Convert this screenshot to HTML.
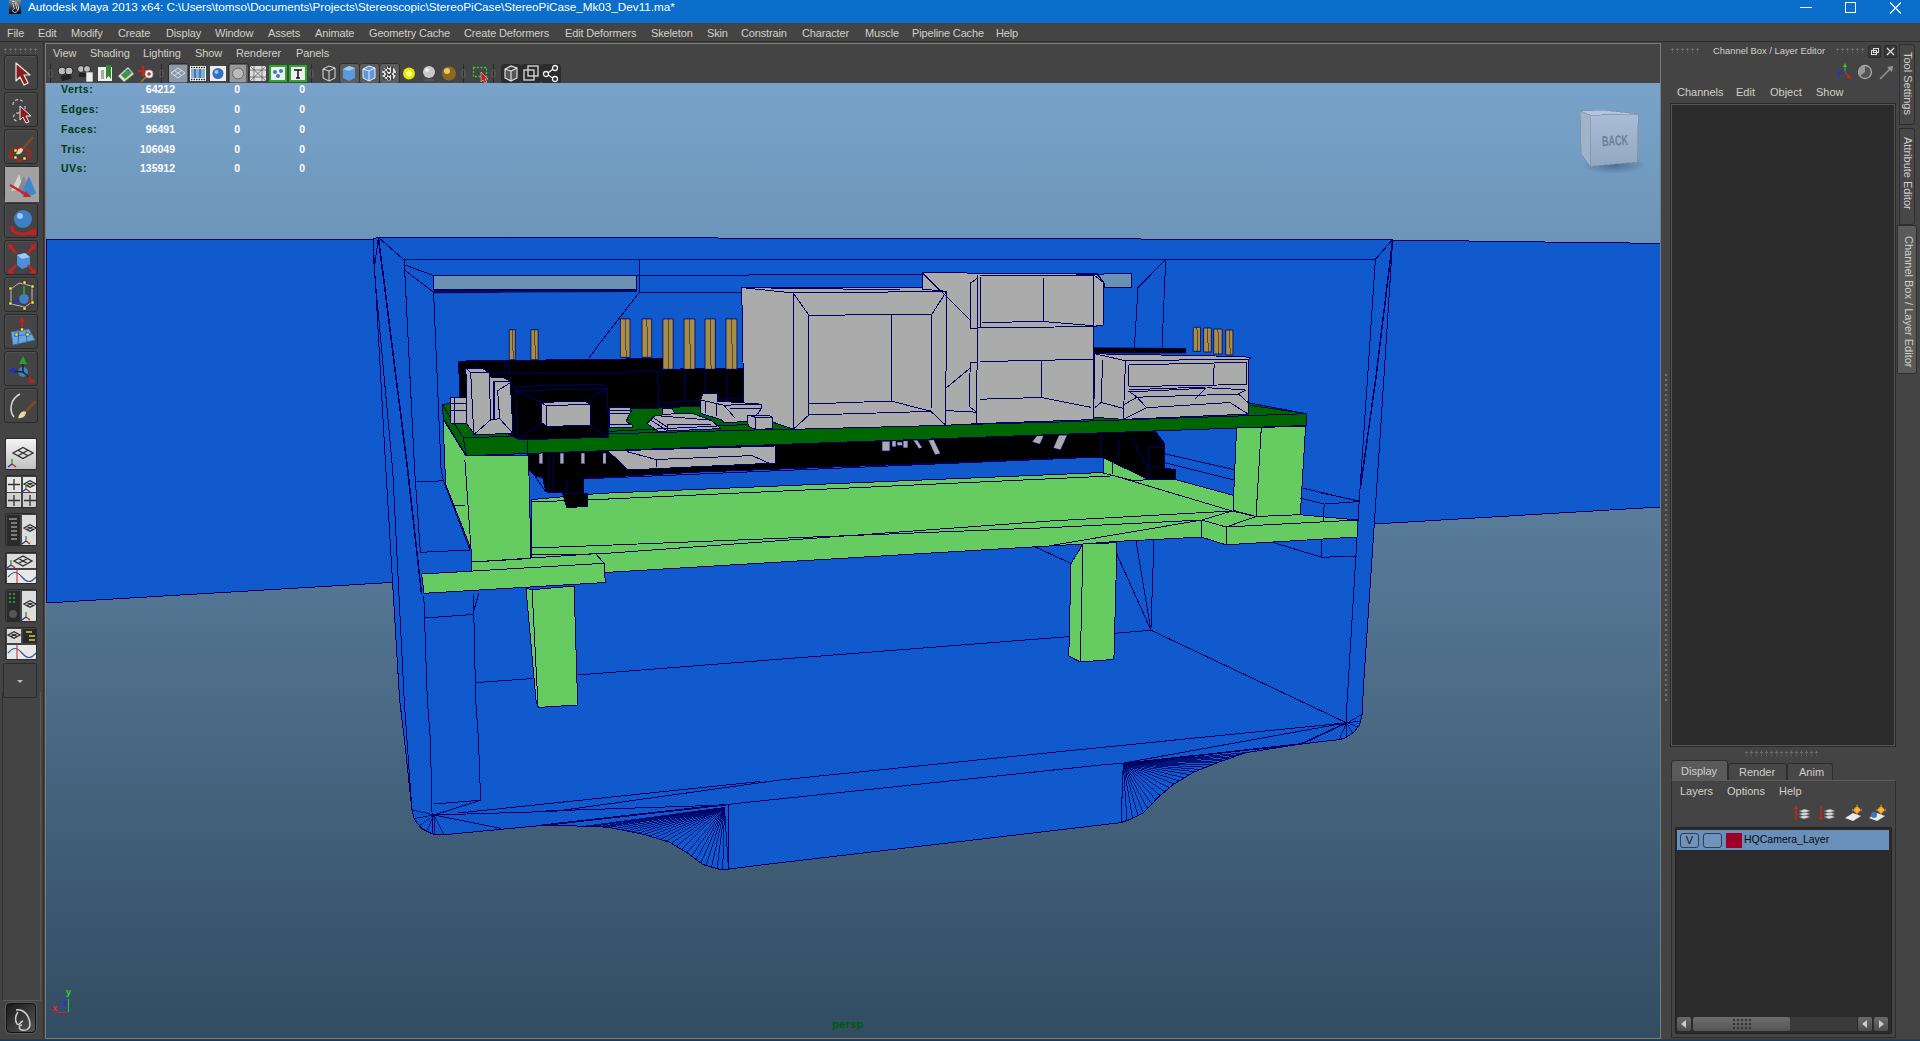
<!DOCTYPE html>
<html><head><meta charset="utf-8">
<style>
*{margin:0;padding:0;box-sizing:border-box}
html,body{width:1920px;height:1041px;overflow:hidden;background:#444444;font-family:"Liberation Sans",sans-serif;}
.a{position:absolute}
#title{left:0;top:0;width:1920px;height:23px;background:#0b6ecb;color:#fff;font-size:12px}
#title .t{left:28px;top:0px;white-space:nowrap;line-height:14px;font-size:11.7px}
#menubar{left:0;top:23px;width:1920px;height:19px;background:#444444;border-bottom:1px solid #2d2d2d}
.mi{position:absolute;top:4px;font-size:11px;line-height:12px;color:#d2d0c8;white-space:nowrap;letter-spacing:-0.15px}
#toolbox{left:0;top:42px;width:44px;height:999px;background:#444444;border-right:1px solid #2e2e2e}
.tb{position:absolute;left:4px;width:34px;height:35px;border:1px solid #2a2a2a;border-radius:3px;background:#444;box-shadow:inset 1px 1px 0 #505050}
.tb svg{position:absolute;left:0;top:0}
.lb{position:absolute;left:5px;width:32px;border:1px solid #2a2a2a;border-radius:2px;background:#444}
#panel{left:45px;top:43px;width:1616px;height:996px;border:1px solid #7b7b7b;background:#444}
.pm{position:absolute;top:2.5px;letter-spacing:-0.1px;font-size:11px;line-height:12px;color:#d2d0c8;white-space:nowrap}
#right{left:1661px;top:42px;width:259px;height:997px;background:#444444}
.rt{position:absolute;font-size:11px;line-height:12px;color:#d2d0c8;white-space:nowrap}
.stat{position:absolute;font-weight:bold;font-size:10.5px;line-height:12px;white-space:nowrap;letter-spacing:0.2px}
.g{color:#003a10}
.w{color:#ffffff;text-align:right}
.ico{position:absolute;top:20px;width:18px;height:18px}
.dots{position:absolute;height:5px;background-image:radial-gradient(circle at 1.5px 1.5px,#6a6a6a 1px,transparent 1.3px);background-size:5px 4px}
</style></head><body>
<div id="title" class="a">
 <svg class="a" style="left:9px;top:0px" width="12" height="14" viewBox="0 0 12 14"><defs><linearGradient id="ig" x1="0" y1="0" x2="0" y2="1"><stop offset="0" stop-color="#8a9096"/><stop offset="0.55" stop-color="#3a3e42"/><stop offset="1" stop-color="#000"/></linearGradient></defs><rect x="0" y="0" width="12" height="14" fill="url(#ig)"/><path d="M3 1.5 C6 1 9 3 9.5 7 C10 10 8 12.5 5.5 12.5 C3.5 12 3 10 4.5 9.5 M3.5 3 C5 5 4 7 5.5 9 M6 3 C7.5 5 7 8 8.5 10" stroke="#dcdcdc" stroke-width="0.9" fill="none"/></svg>
 <div class="a t">Autodesk Maya 2013 x64: C:\Users\tomso\Documents\Projects\Stereoscopic\StereoPiCase\StereoPiCase_Mk03_Dev11.ma*</div>
 <svg class="a" style="left:1795px;top:0" width="120" height="22"><line x1="5" y1="7.5" x2="17" y2="7.5" stroke="#fff" stroke-width="1"/><rect x="50.5" y="2.5" width="10" height="10" fill="none" stroke="#fff" stroke-width="1"/><path d="M95 2.5 L106 13.5 M106 2.5 L95 13.5" stroke="#fff" stroke-width="1.1"/></svg>
</div>
<div id="menubar" class="a">
 <span class="mi" style="left:7px">File</span>
 <span class="mi" style="left:38px">Edit</span>
 <span class="mi" style="left:71px">Modify</span>
 <span class="mi" style="left:118px">Create</span>
 <span class="mi" style="left:166px">Display</span>
 <span class="mi" style="left:215px">Window</span>
 <span class="mi" style="left:268px">Assets</span>
 <span class="mi" style="left:315px">Animate</span>
 <span class="mi" style="left:369px">Geometry Cache</span>
 <span class="mi" style="left:464px">Create Deformers</span>
 <span class="mi" style="left:565px">Edit Deformers</span>
 <span class="mi" style="left:651px">Skeleton</span>
 <span class="mi" style="left:707px">Skin</span>
 <span class="mi" style="left:741px">Constrain</span>
 <span class="mi" style="left:802px">Character</span>
 <span class="mi" style="left:865px">Muscle</span>
 <span class="mi" style="left:912px">Pipeline Cache</span>
 <span class="mi" style="left:996px">Help</span>
</div>
<div id="toolbox" class="a">
 <div class="dots" style="left:4px;top:6px;width:34px"></div>
 <div class="a" style="left:2px;top:650px;width:39px;height:309px;border-left:1px solid #2f2f2f;border-right:1px solid #5a5a5a;border-bottom:1px solid #5a5a5a"></div>
<div class="tb" style="top:13px;background:#444444"><svg width="34" height="35" viewBox="0 0 34 35"><path d="M11 7 L11 25 L15 21 L19 29 L23 27 L19 19 L25 19 Z" fill="#8c1c1c" stroke="#e8e8e8" stroke-width="1.2" stroke-linejoin="round"/></svg></div>
<div class="tb" style="top:50px;background:#444444"><svg width="34" height="35" viewBox="0 0 34 35"><path d="M8 12 C8 6 16 5 18 9 M20 13 C21 18 16 20 12 20 C6 22 9 28 12 28" stroke="#bdbdbd" stroke-width="1.3" fill="none" stroke-dasharray="3 2"/><path d="M15 13 L15 27 L18 24 L21 30 L24 29 L21 23 L26 23 Z" fill="#8c1c1c" stroke="#e8e8e8" stroke-width="1" stroke-linejoin="round"/></svg></div>
<div class="tb" style="top:87px;background:#444"><svg width="34" height="35" viewBox="0 0 34 35"><ellipse cx="15" cy="24" rx="10" ry="6" fill="none" stroke="#c21a1a" stroke-width="2"/><path d="M28 7 L17 20" stroke="#7a4a25" stroke-width="2.5"/><path d="M11 24 C12 19 15 17 18 19 C18 23 14 25 11 24Z" fill="#e6d9a8"/><rect x="9" y="19" width="3" height="3" fill="#ffef55" stroke="#222" stroke-width="0.5"/><rect x="9" y="26" width="3" height="3" fill="#ffef55" stroke="#222" stroke-width="0.5"/><rect x="18" y="27" width="3" height="3" fill="#ffef55" stroke="#222" stroke-width="0.5"/></svg></div>
<div class="tb" style="top:124px;background:#444444"><svg width="34" height="35" viewBox="0 0 34 35"><rect x="0" y="0" width="34" height="35" fill="#a2a2a2"/><path d="M6 24 L14 7 L18 22Z" fill="#d0d0d0"/><path d="M12 24 L19 9 L23 22Z" fill="#8a8a8a"/><path d="M16 27 L24 9 L31 26 C26 30 20 30 16 27Z" fill="#3f86cc"/><path d="M5 18 L22 28" stroke="#d4201f" stroke-width="2.5"/><path d="M18 30 L26 30 L21 24Z" fill="#d4201f"/></svg></div>
<div class="tb" style="top:161px;background:#444444"><svg width="34" height="35" viewBox="0 0 34 35"><circle cx="18" cy="15" r="9" fill="#3f7fc4"/><circle cx="15" cy="12" r="3" fill="#9cc8f0"/><path d="M7 22 C5 30 20 33 29 26" stroke="#c81e1e" stroke-width="3" fill="none"/><path d="M24 31 L31 24 L31 31Z" fill="#c81e1e"/></svg></div>
<div class="tb" style="top:198px;background:#444444"><svg width="34" height="35" viewBox="0 0 34 35"><path d="M12 14 L20 12 L25 16 L25 25 L17 28 L12 24Z" fill="#4b90d6"/><path d="M12 14 L20 12 L25 16 L17 18Z" fill="#9ccaf2"/><path d="M5 5 L11 12 M29 5 L23 12 M5 31 L11 24 M29 31 L23 24" stroke="#cc1f1f" stroke-width="2.5"/><path d="M3 3 L9 4 L4 9Z M31 3 L25 4 L30 9Z M3 33 L4 27 L9 32Z M31 33 L30 27 L25 32Z" fill="#cc1f1f"/></svg></div>
<div class="tb" style="top:235px;background:#444444"><svg width="34" height="35" viewBox="0 0 34 35"><path d="M6 11 L14 5 L27 8 L27 24 L20 29 L6 26Z" fill="none" stroke="#bbb" stroke-width="1"/><circle cx="19" cy="21" r="5" fill="#3f7fc4"/><path d="M19 16 L19 8" stroke="#2a9a2a" stroke-width="2"/><path d="M14 22 L8 25" stroke="#2030c0" stroke-width="2"/><path d="M23 22 L28 25" stroke="#c02020" stroke-width="2"/><g fill="#ffef55" stroke="#222" stroke-width="0.5"><rect x="4" y="9" width="3" height="3"/><rect x="18" y="3" width="3" height="3"/><rect x="26" y="7" width="3" height="3"/><rect x="4" y="24" width="3" height="3"/><rect x="26" y="23" width="3" height="3"/><rect x="18" y="29" width="3" height="3"/></g></svg></div>
<div class="tb" style="top:272px;background:#444444"><svg width="34" height="35" viewBox="0 0 34 35"><path d="M6 17 L24 14 L30 25 L8 30Z" fill="#6aa7e0" stroke="#2f6fb0" stroke-width="0.8"/><path d="M9 21 L27 19 M14 16 L13 29 M21 15 L22 27" stroke="#2f6fb0" stroke-width="1"/><path d="M17 16 L17 5" stroke="#c81e1e" stroke-width="2"/><path d="M14 7 L17 2 L20 7Z" fill="#c81e1e"/><g fill="#ffef55" stroke="#222" stroke-width="0.5"><rect x="15.5" y="13" width="3" height="3"/><rect x="10" y="18" width="3" height="3"/><rect x="21" y="18" width="3" height="3"/></g></svg></div>
<div class="tb" style="top:309px;background:#444444"><svg width="34" height="35" viewBox="0 0 34 35"><circle cx="18" cy="20" r="5" fill="#3f7fc4"/><path d="M18 20 L18 6" stroke="#222" stroke-width="1.5"/><path d="M14 12 L18 4 L22 12Z" fill="#2aa02a"/><path d="M18 20 L6 19" stroke="#222" stroke-width="1.5"/><path d="M10 15 L3 19 L10 22Z" fill="#2030c0"/><path d="M18 20 L26 27" stroke="#222" stroke-width="1.5"/><path d="M23 23 L30 30 L25 31Z" fill="#c81e1e"/></svg></div>
<div class="tb" style="top:346px;background:#444444"><svg width="34" height="35" viewBox="0 0 34 35"><path d="M15 5 C5 10 4 22 9 28" stroke="#d8d8d8" stroke-width="1.5" fill="none"/><path d="M31 12 L20 23" stroke="#7a4a25" stroke-width="3"/><path d="M13 29 C15 23 18 21 21 23 C21 27 17 30 13 29Z" fill="#e6d9a8"/></svg></div>
<div class="lb" style="top:396px;height:32px;overflow:hidden"><svg width="32" height="32" viewBox="0 0 32 32"><defs><linearGradient id="wg" x1="0" y1="0" x2="0" y2="1"><stop offset="0" stop-color="#f4f4f4"/><stop offset="1" stop-color="#bdbdbd"/></linearGradient></defs><rect width="32" height="32" fill="url(#wg)"/><path d="M7 14 L17 8.5 L27 14 L17 19.5Z M12.0 11.25 L22.0 16.75 M22.0 11.25 L12.0 16.75" stroke="#2b2b2b" stroke-width="1.3" fill="none"/><path d="M6 25 L6 20" stroke="#20a020" stroke-width="1.3"/><path d="M6 25 L2 28" stroke="#2030c0" stroke-width="1.3"/><path d="M6 25 L10 28" stroke="#c02020" stroke-width="1.3"/></svg></div>
<div class="lb" style="top:433px;height:33px;overflow:hidden"><svg width="32" height="33" viewBox="0 0 32 33"><rect width="32" height="33" fill="#444"/><rect x="1" y="1" width="14" height="15" fill="#e4e4e4"/><rect x="17" y="1" width="14" height="15" fill="#e4e4e4"/><rect x="1" y="17" width="14" height="15" fill="#d0d0d0"/><rect x="17" y="17" width="14" height="15" fill="#d0d0d0"/><path d="M8 3 V14 M2 8.5 H14 M8 19 V30 M2 24.5 H14 M24 19 V30 M18 24.5 H30" stroke="#333" stroke-width="1.3"/><path d="M18 8 L24 4.699999999999999 L30 8 L24 11.3Z M21.0 6.35 L27.0 9.65 M27.0 6.35 L21.0 9.65" stroke="#2b2b2b" stroke-width="1.3" fill="none"/><path d="M20 13 L20 8" stroke="#20a020" stroke-width="1.3"/><path d="M20 13 L16 16" stroke="#2030c0" stroke-width="1.3"/><path d="M20 13 L24 16" stroke="#c02020" stroke-width="1.3"/></svg></div>
<div class="lb" style="top:471px;height:33px;overflow:hidden"><svg width="32" height="33" viewBox="0 0 32 33"><rect width="32" height="33" fill="#444"/><rect x="1" y="1" width="13" height="31" fill="#2a2a2a"/><rect x="16" y="1" width="15" height="31" fill="#dcdcdc"/><path d="M3 5 H11 M5 9 H11 M5 13 H11 M5 17 H11 M5 21 H11 M5 25 H11" stroke="#ccc" stroke-width="1"/><path d="M18 14 L24 10.7 L30 14 L24 17.3Z M21.0 12.35 L27.0 15.65 M27.0 12.35 L21.0 15.65" stroke="#2b2b2b" stroke-width="1.3" fill="none"/><path d="M20 27 L20 22" stroke="#20a020" stroke-width="1.3"/><path d="M20 27 L16 30" stroke="#2030c0" stroke-width="1.3"/><path d="M20 27 L24 30" stroke="#c02020" stroke-width="1.3"/></svg></div>
<div class="lb" style="top:510px;height:32px;overflow:hidden"><svg width="32" height="32" viewBox="0 0 32 32"><rect width="32" height="32" fill="#444"/><rect x="1" y="1" width="30" height="14" fill="#dcdcdc"/><rect x="1" y="17" width="30" height="15" fill="#e8e8e8"/><path d="M8 8 L17 3.05 L26 8 L17 12.95Z M12.5 5.525 L21.5 10.475 M21.5 5.525 L12.5 10.475" stroke="#2b2b2b" stroke-width="1.3" fill="none"/><path d="M5 12 L5 7" stroke="#20a020" stroke-width="1.3"/><path d="M5 12 L1 15" stroke="#2030c0" stroke-width="1.3"/><path d="M5 12 L9 15" stroke="#c02020" stroke-width="1.3"/><path d="M2 24 C7 18 11 18 16 24 C21 30 25 30 30 24" stroke="#3a5a9a" stroke-width="1.2" fill="none"/><path d="M11 17 V32" stroke="#d02020" stroke-width="1"/></svg></div>
<div class="lb" style="top:547px;height:33px;overflow:hidden"><svg width="32" height="33" viewBox="0 0 32 33"><rect width="32" height="33" fill="#444"/><rect x="1" y="1" width="13" height="31" fill="#2a2a2a"/><rect x="16" y="1" width="15" height="31" fill="#dcdcdc"/><circle cx="7" cy="24" r="4" fill="#555"/><path d="M3 4 H11 M3 8 H11 M3 12 H11" stroke="#4a4" stroke-width="1.5" stroke-dasharray="2 2"/><path d="M18 14 L24 10.7 L30 14 L24 17.3Z M21.0 12.35 L27.0 15.65 M27.0 12.35 L21.0 15.65" stroke="#2b2b2b" stroke-width="1.3" fill="none"/><path d="M20 27 L20 22" stroke="#20a020" stroke-width="1.3"/><path d="M20 27 L16 30" stroke="#2030c0" stroke-width="1.3"/><path d="M20 27 L24 30" stroke="#c02020" stroke-width="1.3"/></svg></div>
<div class="lb" style="top:585px;height:33px;overflow:hidden"><svg width="32" height="33" viewBox="0 0 32 33"><rect width="32" height="33" fill="#444"/><rect x="1" y="1" width="14" height="14" fill="#dcdcdc"/><rect x="17" y="1" width="14" height="14" fill="#2a2a2a"/><rect x="1" y="17" width="30" height="15" fill="#e8e8e8"/><path d="M2 7 L8 3.6999999999999997 L14 7 L8 10.3Z M5.0 5.35 L11.0 8.65 M11.0 5.35 L5.0 8.65" stroke="#2b2b2b" stroke-width="1.3" fill="none"/><path d="M20 4 H26 M23 8 H29 M23 12 H29" stroke="#d8d040" stroke-width="1.5"/><path d="M2 25 C7 19 11 19 16 25 C21 31 25 31 30 25" stroke="#3a5a9a" stroke-width="1.2" fill="none"/><path d="M11 17 V32" stroke="#d02020" stroke-width="1"/></svg></div>
<div class="lb" style="top:621px;height:35px;left:3px;width:34px;border-color:#2c2c2c;background:#444"><svg width="34" height="35"><path d="M13 16 L19 16 L16 19Z" fill="#bbb"/></svg></div>
<div class="a" style="left:6px;top:961px;width:30px;height:30px;border-radius:4px;background:linear-gradient(135deg,#1a1a1a,#555);border:1px solid #111;box-shadow:0 0 0 1px #5a5a5a"><svg width="30" height="30"><path d="M9 6 C16 5 22 10 23 20 C23 25 19 27 15 26 C11 25 12 21 15 21 M11 8 C8 12 8 17 10 20 C12 22 13 18 16 17" stroke="#d0d0d0" stroke-width="1.5" fill="none"/></svg></div>
</div>
<div id="panel" class="a">
 <span class="pm" style="left:7px">View</span>
 <span class="pm" style="left:44px">Shading</span>
 <span class="pm" style="left:97px">Lighting</span>
 <span class="pm" style="left:149px">Show</span>
 <span class="pm" style="left:190px">Renderer</span>
 <span class="pm" style="left:250px">Panels</span>
<svg class="a" style="left:2px;top:19px" width="5" height="21"><path d="M2.5 1 V20" stroke="#2a2a2a" stroke-width="1"/><rect x="1" y="7" width="3" height="7" rx="1.5" fill="none" stroke="#6a6a6a" stroke-width="0.8"/></svg>
<svg class="a" style="left:11px;top:20px" width="18" height="19" viewBox="0 0 18 19"><circle cx="5" cy="7" r="4" fill="#bbb" stroke="#222"/><circle cx="12" cy="7" r="4" fill="#bbb" stroke="#222"/><rect x="4" y="11" width="10" height="5" fill="#222" transform="rotate(-15 9 13)"/></svg>
<svg class="a" style="left:31px;top:20px" width="18" height="19" viewBox="0 0 18 19"><circle cx="4" cy="5" r="3.5" fill="#bbb" stroke="#222"/><circle cx="10" cy="5" r="3.5" fill="#bbb" stroke="#222"/><rect x="2" y="9" width="8" height="4" fill="#222"/><rect x="9" y="8" width="7" height="10" fill="#eee" stroke="#444" stroke-width="0.6"/></svg>
<svg class="a" style="left:51px;top:20px" width="18" height="19" viewBox="0 0 18 19"><rect x="1" y="3" width="14" height="14" fill="#eee"/><rect x="4" y="6" width="3" height="9" fill="#aaa"/><path d="M9 1 L14 1 L14 15 L11.5 12 L9 15Z" fill="#2a8a2a"/></svg>
<svg class="a" style="left:71px;top:20px" width="18" height="19" viewBox="0 0 18 19"><path d="M1 12 L11 3 L17 10 L7 18Z" fill="#ddd" stroke="#777" stroke-width="0.6"/><path d="M4 11 L11 5 L15 9 L8 15Z" fill="#3a9a3a"/><path d="M8 7 L11 5 L13 7Z" fill="#3a6ad0"/></svg>
<svg class="a" style="left:91px;top:20px" width="18" height="19" viewBox="0 0 18 19"><path d="M6 2 V12 M1 7 H11" stroke="#d02020" stroke-width="2"/><circle cx="12" cy="10" r="4" fill="#fff" stroke="#aaa"/><path d="M10 10 H14 M12 8 V12" stroke="#d02020" stroke-width="1.3"/><path d="M9 13 L4 18" stroke="#a06a30" stroke-width="2"/></svg>
<svg class="a" style="left:113px;top:19px" width="5" height="21"><path d="M2.5 1 V20" stroke="#2a2a2a" stroke-width="1"/><rect x="1" y="7" width="3" height="7" rx="1.5" fill="none" stroke="#6a6a6a" stroke-width="0.8"/></svg>
<div class="a" style="left:122px;top:19px;width:21px;height:21px;border-radius:3px;background:#5c5c5c;border:1px solid #2f2f2f"></div>
<svg class="a" style="left:123px;top:20px" width="18" height="19" viewBox="0 0 18 19"><rect x="0" y="1" width="18" height="17" fill="#8a98a8"/><path d="M2 9 L9 4 L16 9 L9 14Z M5.5 6.5 L12.5 11.5 M12.5 6.5 L5.5 11.5" stroke="#dde" stroke-width="1" fill="none"/></svg>
<svg class="a" style="left:143px;top:20px" width="18" height="19" viewBox="0 0 18 19"><rect x="1" y="2" width="16" height="15" fill="#fff"/><rect x="2" y="5" width="14" height="9" fill="#7ab0e0"/><path d="M2 3.5 H16 M2 15.5 H16" stroke="#222" stroke-width="1.5" stroke-dasharray="1.5 1"/><path d="M6 5 V14 M11 5 V14" stroke="#222" stroke-width="0.8"/></svg>
<svg class="a" style="left:163px;top:20px" width="18" height="19" viewBox="0 0 18 19"><rect x="1" y="2" width="16" height="15" fill="#eee"/><circle cx="9" cy="9.5" r="5.5" fill="#2f6fbf"/><circle cx="7.5" cy="8" r="2" fill="#9cc8f0"/></svg>
<div class="a" style="left:182px;top:19px;width:21px;height:21px;border-radius:3px;background:#5c5c5c;border:1px solid #2f2f2f"></div>
<svg class="a" style="left:183px;top:20px" width="18" height="19" viewBox="0 0 18 19"><rect x="1" y="1" width="16" height="17" fill="#9a9a9a"/><circle cx="9" cy="9.5" r="5.5" fill="#bbb" stroke="#666" stroke-width="1"/></svg>
<svg class="a" style="left:203px;top:20px" width="18" height="19" viewBox="0 0 18 19"><rect x="1" y="2" width="16" height="15" fill="#ddd"/><path d="M1 2 L17 17 M17 2 L1 17 M5 2 V17 M13 2 V17 M1 6 H17 M1 13 H17" stroke="#555" stroke-width="0.7"/></svg>
<svg class="a" style="left:223px;top:20px" width="18" height="19" viewBox="0 0 18 19"><rect x="1" y="2" width="16" height="15" fill="#eee" stroke="#2aaa2a" stroke-width="2"/><circle cx="6" cy="8" r="2" fill="#3a7ac0"/><circle cx="12" cy="7" r="2" fill="#3a7ac0"/><circle cx="9" cy="12" r="2" fill="#3a7ac0"/></svg>
<svg class="a" style="left:243px;top:20px" width="18" height="19" viewBox="0 0 18 19"><rect x="1" y="2" width="16" height="15" fill="#eee" stroke="#2aaa2a" stroke-width="2"/><path d="M5 6 H13 M9 6 V14 M7 14 H11" stroke="#111" stroke-width="1.5"/></svg>
<svg class="a" style="left:263px;top:19px" width="5" height="21"><path d="M2.5 1 V20" stroke="#2a2a2a" stroke-width="1"/><rect x="1" y="7" width="3" height="7" rx="1.5" fill="none" stroke="#6a6a6a" stroke-width="0.8"/></svg>
<svg class="a" style="left:274px;top:20px" width="18" height="19" viewBox="0 0 18 19"><path d="M3 5 L9 2 L15 4 L15 14 L9 17 L3 14Z M3 5 L9 7 L15 4 M9 7 V17" stroke="#ddd" stroke-width="1" fill="none"/></svg>
<div class="a" style="left:293px;top:19px;width:21px;height:21px;border-radius:3px;background:#5c5c5c;border:1px solid #2f2f2f"></div>
<svg class="a" style="left:294px;top:20px" width="18" height="19" viewBox="0 0 18 19"><path d="M3 5 L9 2 L15 4 L15 14 L9 17 L3 14Z" fill="#5a9ad8"/><path d="M3 5 L9 7 L15 4 L9 2Z" fill="#9ccaf2"/></svg>
<div class="a" style="left:313px;top:19px;width:21px;height:21px;border-radius:3px;background:#5c5c5c;border:1px solid #2f2f2f"></div>
<svg class="a" style="left:314px;top:20px" width="18" height="19" viewBox="0 0 18 19"><path d="M3 5 L9 2 L15 4 L15 14 L9 17 L3 14Z" fill="#5a9ad8" stroke="#eef" stroke-width="1"/><path d="M3 5 L9 7 L15 4 M9 7 V17" stroke="#eef" stroke-width="1" fill="none"/></svg>
<div class="a" style="left:333px;top:19px;width:21px;height:21px;border-radius:3px;background:#5c5c5c;border:1px solid #2f2f2f"></div>
<svg class="a" style="left:334px;top:20px" width="18" height="19" viewBox="0 0 18 19"><circle cx="9" cy="9.5" r="7" fill="#ddd"/><path d="M3 6 H15 M2 10 H16 M3 14 H15 M6 3 V16 M9 2 V17 M12 3 V16" stroke="#222" stroke-width="1.6" stroke-dasharray="2 2"/></svg>
<svg class="a" style="left:354px;top:20px" width="18" height="19" viewBox="0 0 18 19"><circle cx="9" cy="9.5" r="6" fill="#e8e800"/><circle cx="9" cy="9.5" r="3" fill="#ffff80"/></svg>
<svg class="a" style="left:374px;top:20px" width="18" height="19" viewBox="0 0 18 19"><circle cx="9" cy="8" r="6" fill="#c8c8c8"/><circle cx="7" cy="6" r="2" fill="#eee"/><ellipse cx="9" cy="16" rx="6" ry="1.5" fill="#555"/></svg>
<svg class="a" style="left:394px;top:20px" width="18" height="19" viewBox="0 0 18 19"><circle cx="9" cy="9.5" r="7" fill="#8a6a20"/><circle cx="7" cy="7" r="3" fill="#e8c870"/></svg>
<svg class="a" style="left:415px;top:19px" width="5" height="21"><path d="M2.5 1 V20" stroke="#2a2a2a" stroke-width="1"/><rect x="1" y="7" width="3" height="7" rx="1.5" fill="none" stroke="#6a6a6a" stroke-width="0.8"/></svg>
<svg class="a" style="left:426px;top:20px" width="18" height="19" viewBox="0 0 18 19"><rect x="1.5" y="3.5" width="13" height="9" fill="none" stroke="#2ad02a" stroke-width="1.3" stroke-dasharray="2 1.5"/><path d="M9 8 L9 18 L11 16 L13 19 L15 18 L13 15 L16 15Z" fill="#c81e1e" stroke="#eee" stroke-width="0.5"/></svg>
<svg class="a" style="left:445px;top:19px" width="5" height="21"><path d="M2.5 1 V20" stroke="#2a2a2a" stroke-width="1"/><rect x="1" y="7" width="3" height="7" rx="1.5" fill="none" stroke="#6a6a6a" stroke-width="0.8"/></svg>
<div class="a" style="left:455px;top:20px;width:20px;height:19px;border-radius:3px;background:#2c2c2c"></div>
<svg class="a" style="left:456px;top:20px" width="18" height="19" viewBox="0 0 18 19"><path d="M3 5 L9 2 L15 4 L15 14 L9 17 L3 14Z M3 5 L9 7 L15 4 M9 7 V17" stroke="#ddd" stroke-width="1.2" fill="#555"/></svg>
<div class="a" style="left:475px;top:20px;width:20px;height:19px;border-radius:3px;background:#2c2c2c"></div>
<svg class="a" style="left:476px;top:20px" width="18" height="19" viewBox="0 0 18 19"><rect x="2" y="6" width="10" height="10" fill="none" stroke="#ddd" stroke-width="1.3"/><rect x="6" y="2" width="10" height="10" fill="none" stroke="#ddd" stroke-width="1.3"/></svg>
<div class="a" style="left:495px;top:20px;width:20px;height:19px;border-radius:3px;background:#2c2c2c"></div>
<svg class="a" style="left:496px;top:20px" width="18" height="19" viewBox="0 0 18 19"><circle cx="4" cy="10" r="2.5" fill="none" stroke="#eee" stroke-width="1.3"/><circle cx="13" cy="4" r="2.5" fill="none" stroke="#eee" stroke-width="1.3"/><circle cx="13" cy="15" r="2.5" fill="none" stroke="#eee" stroke-width="1.3"/><path d="M6 9 L11 5 M6 11 L11 14" stroke="#eee" stroke-width="1.3"/></svg>
</div>
<div id="right" class="a">
<div class="dots" style="left:10px;top:6px;width:30px"></div>
<div class="a" style="left:3px;top:331px;width:4px;height:328px;background-image:radial-gradient(circle at 2px 2px,#707070 0.9px,transparent 1.2px);background-size:4px 5px"></div>
<div class="dots" style="left:175px;top:6px;width:30px"></div>
<span class="rt" style="left:52px;top:3px;font-size:9.4px">Channel Box / Layer Editor</span>
<div class="a" style="left:207px;top:3px;width:13px;height:13px;border:1px solid #2a2a2a;border-radius:2px;background:#3a3a3a"><svg width="11" height="11" style="display:block"><rect x="2.5" y="4.5" width="5" height="4" fill="none" stroke="#ddd"/><rect x="4.5" y="2.5" width="5" height="4" fill="none" stroke="#ddd"/></svg></div>
<div class="a" style="left:223px;top:3px;width:13px;height:13px;border:1px solid #2a2a2a;border-radius:2px;background:#3a3a3a"><svg width="11" height="11" style="display:block"><path d="M2 2 L9 9 M9 2 L2 9" stroke="#ddd" stroke-width="1.2"/></svg></div>
<svg class="a" style="left:175px;top:21px" width="60" height="18"><path d="M9 9 V2" stroke="#2a2" stroke-width="1.5"/><path d="M7 4 L9 0 L11 4Z" fill="#3c3"/><path d="M9 9 L2 11" stroke="#23c" stroke-width="1.5"/><path d="M4 8 L0 11 L4 13Z" fill="#23c"/><path d="M9 9 L14 14" stroke="#c22" stroke-width="1.5"/><path d="M12 12 L16 16 L11 15Z" fill="#c22"/><circle cx="29" cy="9" r="6.5" fill="#555" stroke="#aaa" stroke-width="1.3"/><path d="M29 9 V2.5 A6.5 6.5 0 0 0 24 13Z" fill="#999"/><path d="M44 16 L55 5" stroke="#999" stroke-width="1.5"/><path d="M51 4 L57 3 L56 9Z" fill="#999"/></svg>
<span class="rt" style="left:16px;top:44px;">Channels</span>
<span class="rt" style="left:75px;top:44px;">Edit</span>
<span class="rt" style="left:109px;top:44px;">Object</span>
<span class="rt" style="left:155px;top:44px;">Show</span>
<div class="a" style="left:9px;top:61px;width:226px;height:644px;border:1px solid #2a2a2a;box-shadow:inset 0 0 0 1px #555;background:#2b2b2b"></div>
<div class="dots" style="left:84px;top:709px;width:73px"></div>
<div class="a" style="left:10px;top:718px;width:57px;height:21px;border:1px solid #2e2e2e;border-bottom:none;border-radius:3px 3px 0 0;background:#5a5a5a"></div>
<div class="a" style="left:67px;top:721px;width:59px;height:18px;border:1px solid #2e2e2e;border-bottom:none;border-radius:3px 3px 0 0;background:#474747"></div>
<div class="a" style="left:126px;top:721px;width:46px;height:18px;border:1px solid #2e2e2e;border-bottom:none;border-radius:3px 3px 0 0;background:#474747"></div>
<span class="rt" style="left:20px;top:723px;">Display</span>
<span class="rt" style="left:78px;top:724px;">Render</span>
<span class="rt" style="left:138px;top:724px;">Anim</span>
<div class="a" style="left:10px;top:738px;width:225px;height:258px;border:1px solid #2e2e2e;border-top:1px solid #5a5a5a;background:#444"></div>
<span class="rt" style="left:19px;top:743px;">Layers</span>
<span class="rt" style="left:66px;top:743px;">Options</span>
<span class="rt" style="left:118px;top:743px;">Help</span>
<svg class="a" style="left:132px;top:762px" width="100" height="20"><path d="M3 2 V16" stroke="#c22" stroke-width="1.5"/><path d="M1 5 L3 1 L5 5Z" fill="#c22"/><path d="M6 7 L12 5 L17 7 L11 9Z M6 10 L12 8 L17 10 L11 12Z M6 13 L12 11 L17 13 L11 15Z" fill="#ddd" stroke="#666" stroke-width="0.5"/><path d="M28 2 V16" stroke="#c22" stroke-width="1.5"/><path d="M26 13 L28 17 L30 13Z" fill="#c22"/><path d="M31 7 L37 5 L42 7 L36 9Z M31 10 L37 8 L42 10 L36 12Z M31 13 L37 11 L42 13 L36 15Z" fill="#ddd" stroke="#666" stroke-width="0.5"/><path d="M52 14 L60 9 L68 12 L60 17Z" fill="#e8e8e8"/><circle cx="64" cy="6" r="3" fill="#f90"/><path d="M64 1 V11 M59 6 H69" stroke="#fc6" stroke-width="0.8"/><path d="M76 14 L84 9 L92 12 L84 17Z" fill="#e8e8e8"/><circle cx="81" cy="11" r="3" fill="#3a7ac0"/><circle cx="88" cy="6" r="3" fill="#f90"/><path d="M88 1 V11 M83 6 H93" stroke="#fc6" stroke-width="0.8"/></svg>
<div class="a" style="left:14px;top:785px;width:217px;height:207px;border:1px solid #222;border-radius:2px;background:#2b2b2b"></div>
<div class="a" style="left:16px;top:788px;width:212px;height:20px;background:#6890ba"></div>
<div class="a" style="left:19px;top:791px;width:19px;height:15px;border:1px solid #2b3f55;border-radius:3px;background:#6f93b9;font-size:11px;line-height:13px;text-align:center;color:#111">V</div>
<div class="a" style="left:42px;top:791px;width:19px;height:15px;border:1px solid #2b3f55;border-radius:3px;background:#6f93b9"></div>
<div class="a" style="left:65px;top:791px;width:16px;height:15px;background:#9a0028"></div>
<span class="rt" style="left:83px;top:791px;color:#0a0a0a;font-size:10.5px">HQCamera_Layer</span>
<div class="a" style="left:16px;top:975px;width:14px;height:14px;border-radius:2px;background:linear-gradient(#6a6a6a,#4e4e4e)"><svg width="14" height="14"><path d="M9 3 L4 7 L9 11Z" fill="#ccc"/></svg></div>
<div class="a" style="left:32px;top:975px;width:97px;height:14px;border-radius:2px;background:linear-gradient(#6c6c6c,#555)"></div>
<div class="a" style="left:72px;top:977px;width:19px;height:11px;background-image:radial-gradient(circle at 1px 1px,#333 0.8px,transparent 1px);background-size:4px 4px"></div>
<div class="a" style="left:129px;top:975px;width:67px;height:14px;background:#3a3a3a"></div>
<div class="a" style="left:197px;top:975px;width:14px;height:14px;border-radius:2px;background:linear-gradient(#6a6a6a,#4e4e4e)"><svg width="14" height="14"><path d="M9 3 L4 7 L9 11Z" fill="#ccc"/></svg></div>
<div class="a" style="left:213px;top:975px;width:14px;height:14px;border-radius:2px;background:linear-gradient(#6a6a6a,#4e4e4e)"><svg width="14" height="14"><path d="M5 3 L10 7 L5 11Z" fill="#ccc"/></svg></div>
<div class="a" style="left:238px;top:2px;width:16px;height:81px;border:1px solid #2e2e2e;border-radius:0 3px 3px 0;background:#474747"></div>
<div class="a" style="left:238px;top:86px;width:16px;height:97px;border:1px solid #2e2e2e;border-radius:0 3px 3px 0;background:#474747"></div>
<div class="a" style="left:236px;top:183px;width:20px;height:149px;border:1px solid #2e2e2e;border-radius:0 3px 3px 0;background:#5a5a5a"></div>
<span class="rt" style="left:253px;top:10px;transform-origin:0 0;transform:rotate(90deg)">Tool Settings</span>
<span class="rt" style="left:253px;top:95px;transform-origin:0 0;transform:rotate(90deg)">Attribute Editor</span>
<span class="rt" style="left:254px;top:194px;transform-origin:0 0;transform:rotate(90deg)">Channel Box / Layer Editor</span>
</div>
<div class="a" style="left:0;top:1039px;width:1920px;height:1px;background:#3a3a3a"></div><div class="a" style="left:0;top:1040px;width:1920px;height:1px;background:#143a60"></div>
<svg class="a" style="left:0;top:0" width="1920" height="1041" viewBox="0 0 1920 1041">
<defs>
 <linearGradient id="bg" gradientUnits="userSpaceOnUse" x1="0" y1="83" x2="0" y2="1038">
  <stop offset="0" stop-color="#79a3ca"/>
  <stop offset="1" stop-color="#324c62"/>
 </linearGradient>
 <radialGradient id="shadow" cx="0.5" cy="0.5" r="0.5"><stop offset="0" stop-color="#2a4a6a" stop-opacity="0.55"/><stop offset="1" stop-color="#2a4a6a" stop-opacity="0"/></radialGradient>
 <linearGradient id="cubef" x1="0" y1="0" x2="0" y2="1"><stop offset="0" stop-color="#a9bdd6"/><stop offset="1" stop-color="#93a8bf"/></linearGradient>
 <clipPath id="vp"><rect x="46" y="83" width="1614" height="955"/></clipPath>
</defs>
<g clip-path="url(#vp)" shape-rendering="crispEdges">
<rect x="46" y="83" width="1614" height="955" fill="url(#bg)"/>
<polygon points="46.0,240.0 377.0,239.0 1393.0,240.0 1598.0,242.7 1660.0,243.3 1660.0,507.0 46.0,603.0" fill="#105acd" stroke="#000060" stroke-width="1.0" stroke-linejoin="round" />
<polygon points="373.0,239.2 378.4,237.2 1392.7,239.6 1381.2,420.0 1363.2,690.0 1362.5,713.3 1359.6,725.0 1353.8,732.3 1345.0,738.1 1339.2,739.6 1301.2,744.0 1245.8,752.7 1216.7,762.9 1193.3,772.4 1172.9,784.8 1158.3,797.2 1143.8,812.5 1129.2,819.8 1120.4,822.7 760.0,865.1 728.5,869.1 718.8,869.1 702.7,864.5 686.7,852.5 669.5,842.2 643.0,834.2 608.8,827.3 585.8,826.1 540.0,825.6 452.0,834.0 432.5,834.0 422.0,828.8 414.6,819.8 411.9,809.8 404.5,740.0 399.6,700.0 385.3,460.0" fill="#105acd" stroke="#000060" stroke-width="1.0" stroke-linejoin="round" />
<polygon points="433.6,275.6 636.0,275.6 636.0,289.5 433.6,289.5" fill="url(#bg)" stroke="#000060" stroke-width="1.0" stroke-linejoin="round" />
<polygon points="433.6,289.5 636.0,289.5 637.0,291.5 433.6,293.0" fill="#000a5a" stroke="#000060" stroke-width="0.5" stroke-linejoin="round" />
<polygon points="1097.6,274.2 1131.0,273.2 1131.0,287.6 1104.0,287.6 1104.0,283.0" fill="url(#bg)" stroke="#000060" stroke-width="1.0" stroke-linejoin="round" />
<polyline points="378.4,237.4 407.7,470.0 421.5,593.8" fill="none" stroke="#000060" stroke-width="1.6"/>
<polyline points="373.0,239.2 374.2,269.0 378.4,237.4" fill="none" stroke="#000060" stroke-width="1.0"/>
<polyline points="374.2,269.0 392.7,470.0 404.2,700.0 407.0,740.0 411.9,809.8" fill="none" stroke="#000060" stroke-width="1.0"/>
<polyline points="378.4,237.4 404.2,260.0 414.6,470.0 420.4,552.3" fill="none" stroke="#000060" stroke-width="1.0"/>
<polyline points="404.2,260.0 1375.4,259.4 1392.7,239.6" fill="none" stroke="#000060" stroke-width="1.0"/>
<polyline points="404.0,264.6 433.6,275.6 636.0,275.6 1097.6,273.2" fill="none" stroke="#000060" stroke-width="1.0"/>
<polyline points="404.5,270.0 433.6,292.3" fill="none" stroke="#000060" stroke-width="1.0"/>
<polyline points="433.6,292.3 441.1,470.0 443.4,480.8" fill="none" stroke="#000060" stroke-width="1.0"/>
<polyline points="416.9,481.9 443.4,480.8 470.0,550.0" fill="none" stroke="#000060" stroke-width="1.0"/>
<polyline points="420.4,552.3 470.0,550.0" fill="none" stroke="#000060" stroke-width="1.0"/>
<polyline points="423.8,596.0 427.3,700.0 430.4,740.0 432.5,834.0" fill="none" stroke="#000060" stroke-width="1.0"/>
<polyline points="423.8,618.0 473.4,614.5" fill="none" stroke="#000060" stroke-width="1.0"/>
<polyline points="473.4,593.8 475.7,700.0 478.5,740.0 480.6,800.2" fill="none" stroke="#000060" stroke-width="1.0"/>
<polyline points="479.0,592.6 473.4,612.2" fill="none" stroke="#000060" stroke-width="1.0"/>
<polyline points="475.7,682.6 533.3,678.5" fill="none" stroke="#000060" stroke-width="1.0"/>
<polyline points="577.7,675.0 1068.8,636.6" fill="none" stroke="#000060" stroke-width="1.0"/>
<polyline points="1113.9,633.4 1150.9,630.2 1346.5,722.8" fill="none" stroke="#000060" stroke-width="1.0"/>
<polyline points="1150.9,630.2 1117.0,554.5" fill="none" stroke="#000060" stroke-width="1.0"/>
<polyline points="1150.9,630.2 1135.7,539.4" fill="none" stroke="#000060" stroke-width="1.0"/>
<polyline points="1150.9,630.2 1154.0,539.4" fill="none" stroke="#000060" stroke-width="1.0"/>
<polyline points="434.1,804.0 480.6,800.2 434.1,815.0" fill="none" stroke="#000060" stroke-width="1.0"/>
<polyline points="434.1,815.0 500.7,828.3" fill="none" stroke="#000060" stroke-width="1.0"/>
<polyline points="434.1,815.0 555.0,811.3 780.0,780.0 1100.0,747.6 1346.5,722.8" fill="none" stroke="#000060" stroke-width="1.0"/>
<polyline points="458.4,813.0 555.0,802.9 760.0,781.5" fill="none" stroke="#000060" stroke-width="1.0"/>
<polyline points="540.0,811.2 724.5,805.0 728.0,804.4 760.0,801.0 1100.0,765.1 1123.3,763.1 1346.5,722.8" fill="none" stroke="#000060" stroke-width="1.0"/>
<polyline points="728.0,804.4 728.5,869.1" fill="none" stroke="#000060" stroke-width="1.0"/>
<polyline points="1123.3,762.9 1121.1,822.0" fill="none" stroke="#000060" stroke-width="1.0"/>
<polyline points="1123.3,763.6 1301.2,744.0 1346.5,722.8" fill="none" stroke="#000060" stroke-width="1.6"/>
<polyline points="540.0,825.6 728.0,804.4" fill="none" stroke="#000060" stroke-width="1.8"/>
<polyline points="1375.4,259.4 1367.4,380.0 1359.2,501.0 1346.0,720.0 1346.5,722.8" fill="none" stroke="#000060" stroke-width="1.0"/>
<polyline points="1392.7,239.6 1375.6,380.0 1360.8,484.6" fill="none" stroke="#000060" stroke-width="1.5"/>
<polyline points="1320.0,492.7 1359.2,501.0" fill="none" stroke="#000060" stroke-width="1.0"/>
<polyline points="1165.7,259.3 1162.0,347.7" fill="none" stroke="#000060" stroke-width="1.0"/>
<polyline points="1165.7,259.3 1138.0,287.6 1134.4,347.7" fill="none" stroke="#000060" stroke-width="1.0"/>
<polyline points="639.6,260.0 639.6,292.0" fill="none" stroke="#000060" stroke-width="1.0"/>
<polyline points="639.6,292.0 741.0,292.0" fill="none" stroke="#000060" stroke-width="1.0"/>
<polyline points="639.6,292.0 600.0,343.0 588.5,358.5" fill="none" stroke="#000060" stroke-width="1.0"/>
<polyline points="1164.0,453.6 1234.0,469.6" fill="none" stroke="#000060" stroke-width="1.0"/>
<polyline points="1164.0,462.5 1234.0,480.0" fill="none" stroke="#000060" stroke-width="1.0"/>
<line x1="724.5" y1="807.5" x2="585.8" y2="826.1" stroke="#000060" stroke-width="0.8"/>
<line x1="724.5" y1="807.5" x2="591.6" y2="826.4" stroke="#000060" stroke-width="0.8"/>
<line x1="724.5" y1="807.5" x2="597.5" y2="826.7" stroke="#000060" stroke-width="0.8"/>
<line x1="724.5" y1="807.5" x2="603.3" y2="827.0" stroke="#000060" stroke-width="0.8"/>
<line x1="724.5" y1="807.5" x2="609.2" y2="827.4" stroke="#000060" stroke-width="0.8"/>
<line x1="724.5" y1="807.5" x2="614.9" y2="828.5" stroke="#000060" stroke-width="0.8"/>
<line x1="724.5" y1="807.5" x2="620.6" y2="829.7" stroke="#000060" stroke-width="0.8"/>
<line x1="724.5" y1="807.5" x2="626.4" y2="830.8" stroke="#000060" stroke-width="0.8"/>
<line x1="724.5" y1="807.5" x2="632.1" y2="832.0" stroke="#000060" stroke-width="0.8"/>
<line x1="724.5" y1="807.5" x2="637.8" y2="833.2" stroke="#000060" stroke-width="0.8"/>
<line x1="724.5" y1="807.5" x2="643.6" y2="834.4" stroke="#000060" stroke-width="0.8"/>
<line x1="724.5" y1="807.5" x2="649.2" y2="836.1" stroke="#000060" stroke-width="0.8"/>
<line x1="724.5" y1="807.5" x2="654.8" y2="837.7" stroke="#000060" stroke-width="0.8"/>
<line x1="724.5" y1="807.5" x2="660.4" y2="839.4" stroke="#000060" stroke-width="0.8"/>
<line x1="724.5" y1="807.5" x2="666.0" y2="841.1" stroke="#000060" stroke-width="0.8"/>
<line x1="724.5" y1="807.5" x2="671.3" y2="843.3" stroke="#000060" stroke-width="0.8"/>
<line x1="724.5" y1="807.5" x2="676.4" y2="846.3" stroke="#000060" stroke-width="0.8"/>
<line x1="724.5" y1="807.5" x2="681.4" y2="849.3" stroke="#000060" stroke-width="0.8"/>
<line x1="724.5" y1="807.5" x2="686.4" y2="852.3" stroke="#000060" stroke-width="0.8"/>
<line x1="724.5" y1="807.5" x2="691.1" y2="855.8" stroke="#000060" stroke-width="0.8"/>
<line x1="724.5" y1="807.5" x2="695.8" y2="859.3" stroke="#000060" stroke-width="0.8"/>
<line x1="724.5" y1="807.5" x2="700.5" y2="862.8" stroke="#000060" stroke-width="0.8"/>
<line x1="724.5" y1="807.5" x2="705.6" y2="865.3" stroke="#000060" stroke-width="0.8"/>
<line x1="724.5" y1="807.5" x2="711.3" y2="866.9" stroke="#000060" stroke-width="0.8"/>
<line x1="724.5" y1="807.5" x2="716.9" y2="868.6" stroke="#000060" stroke-width="0.8"/>
<line x1="724.5" y1="807.5" x2="722.7" y2="869.1" stroke="#000060" stroke-width="0.8"/>
<line x1="724.5" y1="807.5" x2="728.5" y2="869.1" stroke="#000060" stroke-width="0.8"/>
<line x1="1123.3" y1="763.6" x2="1121.1" y2="822.0" stroke="#000060" stroke-width="0.8"/>
<line x1="1123.3" y1="763.6" x2="1126.9" y2="820.4" stroke="#000060" stroke-width="0.8"/>
<line x1="1123.3" y1="763.6" x2="1132.5" y2="818.1" stroke="#000060" stroke-width="0.8"/>
<line x1="1123.3" y1="763.6" x2="1137.9" y2="815.4" stroke="#000060" stroke-width="0.8"/>
<line x1="1123.3" y1="763.6" x2="1143.3" y2="812.7" stroke="#000060" stroke-width="0.8"/>
<line x1="1123.3" y1="763.6" x2="1147.6" y2="808.5" stroke="#000060" stroke-width="0.8"/>
<line x1="1123.3" y1="763.6" x2="1151.7" y2="804.1" stroke="#000060" stroke-width="0.8"/>
<line x1="1123.3" y1="763.6" x2="1155.9" y2="799.8" stroke="#000060" stroke-width="0.8"/>
<line x1="1123.3" y1="763.6" x2="1160.2" y2="795.6" stroke="#000060" stroke-width="0.8"/>
<line x1="1123.3" y1="763.6" x2="1164.8" y2="791.7" stroke="#000060" stroke-width="0.8"/>
<line x1="1123.3" y1="763.6" x2="1169.4" y2="787.8" stroke="#000060" stroke-width="0.8"/>
<line x1="1123.3" y1="763.6" x2="1174.2" y2="784.0" stroke="#000060" stroke-width="0.8"/>
<line x1="1123.3" y1="763.6" x2="1179.3" y2="780.9" stroke="#000060" stroke-width="0.8"/>
<line x1="1123.3" y1="763.6" x2="1184.5" y2="777.8" stroke="#000060" stroke-width="0.8"/>
<line x1="1123.3" y1="763.6" x2="1189.6" y2="774.6" stroke="#000060" stroke-width="0.8"/>
<line x1="1123.3" y1="763.6" x2="1194.9" y2="771.7" stroke="#000060" stroke-width="0.8"/>
<line x1="1123.3" y1="763.6" x2="1200.5" y2="769.5" stroke="#000060" stroke-width="0.8"/>
<line x1="1123.3" y1="763.6" x2="1206.1" y2="767.2" stroke="#000060" stroke-width="0.8"/>
<line x1="1123.3" y1="763.6" x2="1211.7" y2="764.9" stroke="#000060" stroke-width="0.8"/>
<line x1="1123.3" y1="763.6" x2="1217.3" y2="762.7" stroke="#000060" stroke-width="0.8"/>
<line x1="1123.3" y1="763.6" x2="1223.0" y2="760.7" stroke="#000060" stroke-width="0.8"/>
<line x1="1123.3" y1="763.6" x2="1228.7" y2="758.7" stroke="#000060" stroke-width="0.8"/>
<line x1="1123.3" y1="763.6" x2="1234.4" y2="756.7" stroke="#000060" stroke-width="0.8"/>
<line x1="1123.3" y1="763.6" x2="1240.1" y2="754.7" stroke="#000060" stroke-width="0.8"/>
<line x1="1123.3" y1="763.6" x2="1245.8" y2="752.7" stroke="#000060" stroke-width="0.8"/>
<line x1="434.1" y1="815.0" x2="411.9" y2="809.8" stroke="#000060" stroke-width="0.8"/>
<line x1="434.1" y1="815.0" x2="414.2" y2="818.5" stroke="#000060" stroke-width="0.8"/>
<line x1="434.1" y1="815.0" x2="419.4" y2="825.6" stroke="#000060" stroke-width="0.8"/>
<line x1="434.1" y1="815.0" x2="426.4" y2="831.0" stroke="#000060" stroke-width="0.8"/>
<line x1="434.1" y1="815.0" x2="434.6" y2="834.0" stroke="#000060" stroke-width="0.8"/>
<line x1="434.1" y1="815.0" x2="443.6" y2="834.0" stroke="#000060" stroke-width="0.8"/>
<line x1="1346.5" y1="722.8" x2="1362.5" y2="713.3" stroke="#000060" stroke-width="0.8"/>
<line x1="1346.5" y1="722.8" x2="1360.7" y2="720.7" stroke="#000060" stroke-width="0.8"/>
<line x1="1346.5" y1="722.8" x2="1357.7" y2="727.4" stroke="#000060" stroke-width="0.8"/>
<line x1="1346.5" y1="722.8" x2="1352.7" y2="733.1" stroke="#000060" stroke-width="0.8"/>
<line x1="1346.5" y1="722.8" x2="1346.3" y2="737.2" stroke="#000060" stroke-width="0.8"/>
<line x1="1346.5" y1="722.8" x2="1339.2" y2="739.6" stroke="#000060" stroke-width="0.8"/>
<polyline points="1301.2,744.0 1346.5,722.8" fill="none" stroke="#000060" stroke-width="1.0"/>
<polygon points="531.0,499.6 600.0,493.4 1103.0,472.5 1174.6,479.3 1233.0,495.3 1233.0,511.0 1202.0,520.0 1201.0,537.0 1155.0,539.5 1118.0,541.3 1083.0,544.0 1035.0,546.8 600.0,572.8 531.0,577.0" fill="#66cc62" stroke="#000060" stroke-width="1.0" stroke-linejoin="round" />
<polyline points="531.0,502.0 600.0,499.4 1100.0,476.5 1114.4,475.8 1232.0,511.0" fill="none" stroke="#000060" stroke-width="1.0"/>
<polyline points="532.0,548.0 600.0,545.5 1050.0,527.6 1202.0,520.0" fill="none" stroke="#000060" stroke-width="1.0"/>
<polyline points="532.0,555.0 600.0,553.8 1050.0,521.0 1232.0,511.0" fill="none" stroke="#000060" stroke-width="1.0"/>
<polyline points="1050.0,545.7 1202.0,520.0" fill="none" stroke="#000060" stroke-width="1.0"/>
<polygon points="1236.6,428.0 1305.6,426.2 1300.3,514.7 1256.0,516.5 1233.0,510.3" fill="#66cc62" stroke="#000060" stroke-width="1.0" stroke-linejoin="round" />
<polyline points="1261.4,426.0 1256.0,516.5" fill="none" stroke="#000060" stroke-width="1.0"/>
<polygon points="1202.0,520.0 1232.0,511.0 1256.0,516.5 1300.0,514.7 1358.0,520.0 1357.0,537.0 1226.0,544.8 1201.0,537.0" fill="#66cc62" stroke="#000060" stroke-width="1.0" stroke-linejoin="round" />
<polyline points="1202.0,520.0 1226.0,527.0 1357.9,520.0" fill="none" stroke="#000060" stroke-width="1.0"/>
<polyline points="1226.0,527.0 1226.0,544.8" fill="none" stroke="#000060" stroke-width="1.0"/>
<polyline points="1226.0,527.0 1256.0,516.5" fill="none" stroke="#000060" stroke-width="1.0"/>
<polyline points="1303.0,488.2 1359.6,501.5" fill="none" stroke="#000060" stroke-width="1.0"/>
<polyline points="1300.3,498.0 1324.2,504.1 1359.6,501.5" fill="none" stroke="#000060" stroke-width="1.0"/>
<polyline points="1324.2,504.1 1323.3,521.0" fill="none" stroke="#000060" stroke-width="1.0"/>
<polyline points="1272.0,542.2 1321.6,557.2 1357.0,556.4" fill="none" stroke="#000060" stroke-width="1.0"/>
<polyline points="1321.6,540.4 1321.6,557.2" fill="none" stroke="#000060" stroke-width="1.0"/>
<polygon points="1071.0,563.4 1083.0,544.0 1117.0,542.7 1113.9,659.4 1080.3,662.0 1068.8,656.0" fill="#66cc62" stroke="#000060" stroke-width="1.0" stroke-linejoin="round" />
<polyline points="1083.0,544.0 1080.3,662.0" fill="none" stroke="#000060" stroke-width="1.0"/>
<polyline points="1035.0,546.8 1071.0,563.4" fill="none" stroke="#000060" stroke-width="1.0"/>
<polygon points="443.0,419.0 466.0,456.0 528.5,455.0 531.0,558.5 472.0,562.0 471.0,549.0 445.6,484.0" fill="#66cc62" stroke="#000060" stroke-width="1.0" stroke-linejoin="round" />
<polyline points="453.8,505.0 465.3,505.0" fill="none" stroke="#000060" stroke-width="1.0"/>
<polyline points="464.9,460.0 471.0,549.0" fill="none" stroke="#000060" stroke-width="1.0"/>
<polyline points="446.3,421.9 463.3,451.5" fill="none" stroke="#000060" stroke-width="1.0"/>
<polygon points="421.6,574.0 471.0,571.2 472.0,562.0 595.7,553.7 604.1,563.3 605.3,582.5 424.0,593.3" fill="#66cc62" stroke="#000060" stroke-width="1.0" stroke-linejoin="round" />
<polyline points="472.0,562.0 531.0,558.5" fill="none" stroke="#000060" stroke-width="1.0"/>
<polyline points="421.6,574.0 604.1,563.3" fill="none" stroke="#000060" stroke-width="1.0"/>
<polygon points="526.0,588.5 532.1,589.7 574.1,586.0 577.7,705.0 538.1,707.4 536.0,700.0" fill="#66cc62" stroke="#000060" stroke-width="1.0" stroke-linejoin="round" />
<polyline points="532.1,589.7 538.1,707.4" fill="none" stroke="#000060" stroke-width="1.0"/>
<polygon points="528.0,453.0 1155.0,430.5 1164.0,443.0 1164.0,468.0 1175.5,469.6 1175.5,479.3 1148.0,479.3 1103.8,458.0 1100.0,457.0 700.0,472.0 583.3,478.3 584.0,493.0 587.5,494.0 587.5,506.5 566.7,507.5 562.5,493.0 545.8,491.9 542.7,478.0 535.0,476.0 529.0,470.0 528.0,470.0" fill="#000000" stroke="#000060" stroke-width="1.0" stroke-linejoin="round" />
<polyline points="583.0,478.9 700.0,474.0 1100.0,457.0" fill="none" stroke="#000060" stroke-width="1.0"/>
<polyline points="529.0,470.0 535.0,476.0 545.8,491.9" fill="none" stroke="#000060" stroke-width="1.0"/>
<polyline points="548.0,456.0 548.0,491.0" fill="none" stroke="#000060" stroke-width="1.0"/>
<polyline points="553.0,456.0 553.0,492.0" fill="none" stroke="#000060" stroke-width="1.0"/>
<polyline points="562.5,493.0 587.5,494.0" fill="none" stroke="#000060" stroke-width="1.0"/>
<polyline points="566.0,480.0 566.0,494.0" fill="none" stroke="#000060" stroke-width="1.0"/>
<polyline points="562.5,493.0 586.5,493.0" fill="none" stroke="#000060" stroke-width="1.0"/>
<polyline points="1100.0,436.0 1100.0,457.0" fill="none" stroke="#000060" stroke-width="1.0"/>
<polyline points="1118.0,436.0 1118.0,462.0" fill="none" stroke="#000060" stroke-width="1.0"/>
<polyline points="1130.0,436.0 1148.0,467.8" fill="none" stroke="#000060" stroke-width="1.0"/>
<polyline points="1148.0,447.5 1164.0,447.5" fill="none" stroke="#000060" stroke-width="1.0"/>
<polyline points="1148.0,447.5 1148.0,479.3" fill="none" stroke="#000060" stroke-width="1.0"/>
<polyline points="1148.0,467.8 1164.0,468.0" fill="none" stroke="#000060" stroke-width="1.0"/>
<polyline points="1155.0,433.0 1164.0,443.0" fill="none" stroke="#000060" stroke-width="1.0"/>
<polygon points="608.0,451.0 775.0,446.0 776.0,463.0 628.0,470.0" fill="#ababab" stroke="#000060" stroke-width="1.0" stroke-linejoin="round" />
<polyline points="627.3,451.7 656.0,459.5 752.3,455.6 769.3,463.4" fill="none" stroke="#000060" stroke-width="1.0"/>
<polyline points="656.0,459.5 656.0,467.3" fill="none" stroke="#000060" stroke-width="1.0"/>
<polygon points="539.0,453.0 542.7,453.0 542.7,463.7 539.0,463.7" fill="#ababab" stroke="#000060" stroke-width="0.6" stroke-linejoin="round" />
<polygon points="560.0,453.0 563.7,453.0 563.7,463.7 560.0,463.7" fill="#ababab" stroke="#000060" stroke-width="0.6" stroke-linejoin="round" />
<polygon points="581.0,453.0 584.7,453.0 584.7,463.7 581.0,463.7" fill="#ababab" stroke="#000060" stroke-width="0.6" stroke-linejoin="round" />
<polygon points="602.6,453.0 606.3,453.0 606.3,463.7 602.6,463.7" fill="#ababab" stroke="#000060" stroke-width="0.6" stroke-linejoin="round" />
<polygon points="881.9,441.2 890.0,441.2 890.0,451.2 881.9,451.2" fill="#ababab" stroke="#000060" stroke-width="0.8" stroke-linejoin="round" />
<polygon points="891.9,440.6 896.2,440.6 896.2,446.9 891.9,446.9" fill="#ababab" stroke="#000060" stroke-width="0.8" stroke-linejoin="round" />
<polygon points="896.9,441.9 902.5,441.9 902.5,445.6 896.9,445.6" fill="#ababab" stroke="#000060" stroke-width="0.8" stroke-linejoin="round" />
<polygon points="903.0,440.6 908.0,440.6 908.0,448.0 903.0,448.0" fill="#ababab" stroke="#000060" stroke-width="0.8" stroke-linejoin="round" />
<polygon points="913.1,440.0 917.5,440.0 922.5,448.1 918.8,448.8" fill="#ababab" stroke="#000060" stroke-width="0.8" stroke-linejoin="round" />
<polygon points="928.1,440.0 933.8,439.4 940.6,453.8 935.0,455.0" fill="#ababab" stroke="#000060" stroke-width="0.8" stroke-linejoin="round" />
<polygon points="1037.5,435.0 1043.8,435.6 1040.0,444.4 1031.9,441.9" fill="#ababab" stroke="#000060" stroke-width="0.8" stroke-linejoin="round" />
<polygon points="1058.8,435.0 1067.5,435.0 1060.6,450.0 1053.1,448.1" fill="#ababab" stroke="#000060" stroke-width="0.8" stroke-linejoin="round" />
<polygon points="1103.8,458.0 1148.0,479.3 1135.0,481.0 1103.0,473.0" fill="#66cc62" stroke="#000060" stroke-width="1.0" stroke-linejoin="round" />
<polyline points="1112.6,460.7 1112.6,474.0" fill="none" stroke="#000060" stroke-width="1.0"/>
<polygon points="442.6,405.0 458.0,400.0 1250.0,403.0 1306.2,413.7 1306.2,425.5 466.4,455.7 443.2,417.7" fill="#006600" stroke="#000060" stroke-width="1.0" stroke-linejoin="round" />
<polyline points="463.3,437.7 620.0,433.5 1060.0,422.0 1306.2,413.7" fill="none" stroke="#000060" stroke-width="1.0"/>
<polyline points="442.6,405.0 463.3,437.7 466.4,455.7" fill="none" stroke="#000060" stroke-width="1.0"/>
<polyline points="527.7,441.0 527.7,454.6" fill="none" stroke="#000060" stroke-width="1.0"/>
<polyline points="1249.7,405.3 1306.2,413.7" fill="none" stroke="#000060" stroke-width="1.0"/>
<polygon points="458.5,361.1 666.0,358.5 666.0,369.3 745.0,368.1 745.0,404.0 700.0,406.0 660.0,408.0 620.0,409.0 518.0,439.0 459.0,410.0 459.0,373.8" fill="#000000" stroke="#000060" stroke-width="1.0" stroke-linejoin="round" />
<polyline points="459.6,373.8 657.6,371.7 666.0,371.0" fill="none" stroke="#000060" stroke-width="1.0"/>
<polyline points="657.6,371.7 658.8,409.0" fill="none" stroke="#000060" stroke-width="1.0"/>
<polyline points="660.0,369.3 741.7,368.1" fill="none" stroke="#000060" stroke-width="1.0"/>
<polyline points="684.0,371.0 684.0,401.0" fill="none" stroke="#000060" stroke-width="1.0"/>
<polyline points="705.0,371.0 705.0,401.0" fill="none" stroke="#000060" stroke-width="1.0"/>
<polyline points="726.0,371.0 726.0,401.0" fill="none" stroke="#000060" stroke-width="1.0"/>
<polyline points="660.0,403.0 741.7,398.0" fill="none" stroke="#000060" stroke-width="1.0"/>
<polyline points="476.0,362.0 476.0,373.0" fill="none" stroke="#000060" stroke-width="1.0"/>
<polyline points="504.0,361.0 504.0,373.0" fill="none" stroke="#000060" stroke-width="1.0"/>
<polyline points="509.0,361.0 509.0,373.0" fill="none" stroke="#000060" stroke-width="1.0"/>
<polygon points="509.3,329.7 515.3,329.7 515.3,359.7 509.3,359.7" fill="#a88e45" stroke="#000060" stroke-width="0.8" stroke-linejoin="round" />
<polyline points="512.3,329.7 513.3,359.7" fill="none" stroke="#000050" stroke-width="0.5"/>
<polygon points="530.9,329.7 538.1,329.7 538.1,359.7 530.9,359.7" fill="#a88e45" stroke="#000060" stroke-width="0.8" stroke-linejoin="round" />
<polyline points="534.5,329.7 535.5,359.7" fill="none" stroke="#000050" stroke-width="0.5"/>
<polygon points="620.4,318.9 630.0,318.9 630.0,357.3 620.4,357.3" fill="#a88e45" stroke="#000060" stroke-width="0.8" stroke-linejoin="round" />
<polyline points="625.2,318.9 626.2,357.3" fill="none" stroke="#000050" stroke-width="0.5"/>
<polygon points="642.0,318.9 651.6,318.9 651.6,357.3 642.0,357.3" fill="#a88e45" stroke="#000060" stroke-width="0.8" stroke-linejoin="round" />
<polyline points="646.8,318.9 647.8,357.3" fill="none" stroke="#000050" stroke-width="0.5"/>
<polygon points="662.9,318.9 673.2,318.9 673.2,369.3 662.9,369.3" fill="#a88e45" stroke="#000060" stroke-width="0.8" stroke-linejoin="round" />
<polyline points="668.0,318.9 669.0,369.3" fill="none" stroke="#000050" stroke-width="0.5"/>
<polygon points="684.0,318.9 694.9,318.9 694.9,369.3 684.0,369.3" fill="#a88e45" stroke="#000060" stroke-width="0.8" stroke-linejoin="round" />
<polyline points="689.5,318.9 690.5,369.3" fill="none" stroke="#000050" stroke-width="0.5"/>
<polygon points="705.0,318.9 715.3,318.9 715.3,369.3 705.0,369.3" fill="#a88e45" stroke="#000060" stroke-width="0.8" stroke-linejoin="round" />
<polyline points="710.1,318.9 711.1,369.3" fill="none" stroke="#000050" stroke-width="0.5"/>
<polygon points="726.0,318.9 736.9,318.9 736.9,369.3 726.0,369.3" fill="#a88e45" stroke="#000060" stroke-width="0.8" stroke-linejoin="round" />
<polyline points="731.5,318.9 732.5,369.3" fill="none" stroke="#000050" stroke-width="0.5"/>
<polygon points="1193.3,327.3 1200.5,327.3 1200.5,351.3 1193.3,351.3" fill="#a88e45" stroke="#000060" stroke-width="0.8" stroke-linejoin="round" />
<polyline points="1196.9,327.3 1197.9,351.3" fill="none" stroke="#000050" stroke-width="0.5"/>
<polygon points="1203.6,328.0 1211.3,328.0 1211.3,352.0 1203.6,352.0" fill="#a88e45" stroke="#000060" stroke-width="0.8" stroke-linejoin="round" />
<polyline points="1207.4,328.0 1208.4,352.0" fill="none" stroke="#000050" stroke-width="0.5"/>
<polygon points="1213.7,329.0 1222.1,329.0 1222.1,354.0 1213.7,354.0" fill="#a88e45" stroke="#000060" stroke-width="0.8" stroke-linejoin="round" />
<polyline points="1217.9,329.0 1218.9,354.0" fill="none" stroke="#000050" stroke-width="0.5"/>
<polygon points="1225.7,330.0 1232.9,330.0 1232.9,354.9 1225.7,354.9" fill="#a88e45" stroke="#000060" stroke-width="0.8" stroke-linejoin="round" />
<polyline points="1229.3,330.0 1230.3,354.9" fill="none" stroke="#000050" stroke-width="0.5"/>
<polygon points="450.0,397.0 466.4,397.0 466.4,423.0 450.6,423.0" fill="#ababab" stroke="#000060" stroke-width="1.0" stroke-linejoin="round" />
<polyline points="450.0,403.0 466.0,403.0" fill="none" stroke="#000060" stroke-width="1.0"/>
<polyline points="450.5,410.0 466.0,410.0" fill="none" stroke="#000060" stroke-width="1.0"/>
<polyline points="454.0,397.0 454.0,423.0" fill="none" stroke="#000060" stroke-width="1.0"/>
<polygon points="465.9,368.0 482.8,368.5 489.2,372.7 490.7,419.8 499.7,418.7 513.0,433.5 474.9,434.6 467.0,424.0" fill="#ababab" stroke="#000060" stroke-width="1.0" stroke-linejoin="round" />
<polyline points="465.9,368.0 470.7,372.7 489.2,372.7" fill="none" stroke="#000060" stroke-width="1.0"/>
<polyline points="470.7,372.7 473.8,434.6" fill="none" stroke="#000060" stroke-width="1.0"/>
<polyline points="490.7,419.8 473.8,434.6" fill="none" stroke="#000060" stroke-width="1.0"/>
<polygon points="490.2,377.0 503.4,377.5 510.3,381.2 513.0,433.5 499.7,418.7 490.7,419.8 489.2,372.7" fill="#ababab" stroke="#000060" stroke-width="1.0" stroke-linejoin="round" />
<polyline points="494.0,381.2 510.3,381.2" fill="none" stroke="#000060" stroke-width="1.0"/>
<polyline points="497.6,390.7 510.3,382.8" fill="none" stroke="#000060" stroke-width="1.0"/>
<polyline points="497.6,390.7 499.7,418.7" fill="none" stroke="#000060" stroke-width="1.0"/>
<polyline points="494.0,381.2 494.0,419.0" fill="none" stroke="#000060" stroke-width="1.5"/>
<polygon points="513.0,386.5 602.0,384.4 607.5,388.6 608.6,437.2 518.2,439.9 515.6,390.7" fill="#000000" stroke="#000060" stroke-width="1.0" stroke-linejoin="round" />
<polyline points="515.6,390.7 607.5,388.6" fill="none" stroke="#000060" stroke-width="1.0"/>
<polyline points="515.6,390.7 541.5,402.3" fill="none" stroke="#000060" stroke-width="1.0"/>
<polyline points="607.5,388.6 584.8,399.7" fill="none" stroke="#000060" stroke-width="1.0"/>
<polyline points="518.2,439.9 542.0,423.0" fill="none" stroke="#000060" stroke-width="1.0"/>
<polyline points="608.6,437.2 590.6,425.0" fill="none" stroke="#000060" stroke-width="1.0"/>
<polygon points="541.0,402.3 584.8,401.3 590.6,404.0 590.6,425.0 546.8,426.6 542.0,423.0" fill="#ababab" stroke="#000060" stroke-width="1.0" stroke-linejoin="round" />
<polyline points="546.2,406.0 590.6,404.0" fill="none" stroke="#000060" stroke-width="1.0"/>
<polyline points="546.2,406.0 546.8,426.6" fill="none" stroke="#000060" stroke-width="1.0"/>
<polyline points="541.0,402.3 546.2,406.0" fill="none" stroke="#000060" stroke-width="1.0"/>
<polygon points="741.7,287.6 921.0,287.6 946.5,291.4 793.3,293.0" fill="#ababab" stroke="#000060" stroke-width="1.0" stroke-linejoin="round" />
<polygon points="741.7,287.6 793.3,293.0 793.3,429.3 772.4,421.9 744.0,419.0" fill="#ababab" stroke="#000060" stroke-width="1.0" stroke-linejoin="round" />
<polygon points="793.3,293.0 946.5,291.4 945.7,425.3 793.3,429.3" fill="#ababab" stroke="#000060" stroke-width="1.0" stroke-linejoin="round" />
<polyline points="793.3,293.0 808.9,315.3 931.8,314.3 946.5,291.4" fill="none" stroke="#000060" stroke-width="1.0"/>
<polyline points="808.9,315.3 808.9,415.0 931.0,411.4 931.8,314.3" fill="none" stroke="#000060" stroke-width="1.0"/>
<polyline points="931.0,411.4 945.7,425.3" fill="none" stroke="#000060" stroke-width="1.0"/>
<polyline points="808.9,415.0 793.3,429.3" fill="none" stroke="#000060" stroke-width="1.0"/>
<polyline points="891.2,315.3 891.2,401.0 931.0,411.4" fill="none" stroke="#000060" stroke-width="1.0"/>
<polyline points="808.9,404.0 891.2,401.0" fill="none" stroke="#000060" stroke-width="1.0"/>
<polyline points="741.7,287.6 900.0,289.8" fill="none" stroke="#000060" stroke-width="1.0"/>
<polygon points="922.0,272.6 1096.8,274.2 1104.0,283.2 1103.3,324.9 1093.5,326.5 1093.5,359.2 1102.5,360.0 1102.5,401.6 1092.7,419.6 976.7,423.7 945.7,425.3 946.5,291.4 922.0,289.0" fill="#ababab" stroke="#000060" stroke-width="1.0" stroke-linejoin="round" />
<polyline points="922.0,272.6 970.2,320.0" fill="none" stroke="#000060" stroke-width="1.0"/>
<polyline points="946.5,387.7 970.2,368.1" fill="none" stroke="#000060" stroke-width="1.0"/>
<polyline points="945.7,410.6 976.7,412.2" fill="none" stroke="#000060" stroke-width="1.0"/>
<polyline points="977.6,275.0 976.7,423.7" fill="none" stroke="#000060" stroke-width="1.0"/>
<polyline points="976.7,423.7 1092.7,419.6" fill="none" stroke="#000060" stroke-width="1.0"/>
<polyline points="1093.5,275.0 1093.5,420.0" fill="none" stroke="#000060" stroke-width="1.0"/>
<polyline points="978.4,277.5 970.2,283.2 970.2,328.1 1093.5,326.5" fill="none" stroke="#000060" stroke-width="1.0"/>
<polyline points="980.0,275.5 1095.1,275.9" fill="none" stroke="#000060" stroke-width="1.0"/>
<polyline points="980.0,277.0 980.0,327.3" fill="none" stroke="#000060" stroke-width="1.0"/>
<polyline points="1043.7,277.5 1043.7,321.6" fill="none" stroke="#000060" stroke-width="1.0"/>
<polyline points="981.6,322.4 1043.7,321.6 1093.5,325.7" fill="none" stroke="#000060" stroke-width="1.0"/>
<polyline points="1095.1,275.9 1103.3,282.4 1103.3,324.9 1093.5,326.5" fill="none" stroke="#000060" stroke-width="1.0"/>
<polyline points="980.0,361.6 1093.5,359.2" fill="none" stroke="#000060" stroke-width="1.0"/>
<polyline points="976.7,362.4 970.2,362.4 969.4,406.5 976.7,412.2" fill="none" stroke="#000060" stroke-width="1.0"/>
<polyline points="1042.0,360.8 1041.2,397.5" fill="none" stroke="#000060" stroke-width="1.0"/>
<polyline points="980.0,399.2 1041.2,397.5 1091.0,407.3" fill="none" stroke="#000060" stroke-width="1.0"/>
<polyline points="1093.5,360.0 1102.5,360.0 1102.5,401.6 1093.5,409.0" fill="none" stroke="#000060" stroke-width="1.0"/>
<polygon points="1094.3,347.7 1185.7,348.5 1185.7,353.0 1094.3,353.0" fill="#000000" stroke="#000060" stroke-width="0.8" stroke-linejoin="round" />
<polygon points="1094.8,353.8 1242.8,356.5 1251.2,358.0 1249.0,359.1 1248.1,414.1 1123.3,419.4 1093.7,417.3" fill="#ababab" stroke="#000060" stroke-width="1.0" stroke-linejoin="round" />
<polyline points="1094.8,353.8 1125.5,360.7 1249.0,359.1" fill="none" stroke="#000060" stroke-width="1.0"/>
<polyline points="1125.5,360.7 1123.3,419.4" fill="none" stroke="#000060" stroke-width="1.0"/>
<polyline points="1102.7,359.6 1101.1,402.5 1123.3,408.3" fill="none" stroke="#000060" stroke-width="1.0"/>
<polyline points="1094.8,407.7 1101.1,402.5" fill="none" stroke="#000060" stroke-width="1.0"/>
<polyline points="1128.6,364.9 1246.0,362.3" fill="none" stroke="#000060" stroke-width="1.0"/>
<polyline points="1128.6,364.9 1128.6,385.5" fill="none" stroke="#000060" stroke-width="1.0"/>
<polyline points="1246.0,362.3 1246.0,385.0" fill="none" stroke="#000060" stroke-width="1.0"/>
<polyline points="1128.6,386.6 1246.0,384.5" fill="none" stroke="#000060" stroke-width="1.0"/>
<polyline points="1214.2,364.4 1213.2,384.5" fill="none" stroke="#000060" stroke-width="1.0"/>
<polyline points="1128.6,389.8 1205.0,387.0" fill="none" stroke="#000060" stroke-width="1.0"/>
<polyline points="1129.7,391.9 1205.8,388.2" fill="none" stroke="#000060" stroke-width="1.0"/>
<polyline points="1206.8,387.7 1245.0,389.8" fill="none" stroke="#000060" stroke-width="1.0"/>
<polyline points="1128.6,391.0 1137.0,397.2 1146.6,407.7" fill="none" stroke="#000060" stroke-width="1.0"/>
<polyline points="1137.0,397.2 1123.3,405.0" fill="none" stroke="#000060" stroke-width="1.0"/>
<polyline points="1146.6,407.7 1123.3,419.4" fill="none" stroke="#000060" stroke-width="1.0"/>
<polyline points="1137.0,397.2 1238.6,394.0" fill="none" stroke="#000060" stroke-width="1.0"/>
<polyline points="1146.6,407.7 1230.0,402.5" fill="none" stroke="#000060" stroke-width="1.0"/>
<polyline points="1205.8,388.2 1195.0,399.0" fill="none" stroke="#000060" stroke-width="1.0"/>
<polyline points="1238.6,394.0 1249.0,403.5" fill="none" stroke="#000060" stroke-width="1.0"/>
<polyline points="1230.0,402.5 1248.1,414.1" fill="none" stroke="#000060" stroke-width="1.0"/>
<polyline points="1246.0,389.8 1238.6,394.0" fill="none" stroke="#000060" stroke-width="1.0"/>
<polyline points="1123.3,419.4 1248.1,414.1" fill="none" stroke="#000060" stroke-width="1.0"/>
<polygon points="609.0,407.0 630.0,407.0 631.5,411.0 630.0,413.0 626.0,421.6 632.3,425.0 632.3,427.5 609.4,428.0" fill="#ababab" stroke="#000060" stroke-width="1.0" stroke-linejoin="round" />
<polyline points="609.0,410.5 631.0,410.5" fill="none" stroke="#000060" stroke-width="1.0"/>
<polyline points="609.0,413.3 630.0,413.3" fill="none" stroke="#000060" stroke-width="1.0"/>
<polyline points="609.4,424.5 631.0,424.5" fill="none" stroke="#000060" stroke-width="1.0"/>
<polygon points="647.0,423.4 655.3,415.5 662.3,415.0 662.3,408.4 672.2,408.4 675.0,413.6 692.8,413.6 711.1,420.2 720.9,428.6 658.1,431.4" fill="#ababab" stroke="#000060" stroke-width="1.0" stroke-linejoin="round" />
<polyline points="662.3,415.0 675.0,413.6" fill="none" stroke="#000060" stroke-width="1.0"/>
<polyline points="655.3,415.5 711.1,420.2" fill="none" stroke="#000060" stroke-width="1.0"/>
<polyline points="667.5,424.4 711.0,424.4" fill="none" stroke="#000060" stroke-width="1.0"/>
<polyline points="667.5,424.4 667.5,431.0" fill="none" stroke="#000060" stroke-width="1.0"/>
<polyline points="650.0,419.5 667.5,431.0" fill="none" stroke="#000060" stroke-width="1.0"/>
<polyline points="653.0,417.5 667.0,427.0" fill="none" stroke="#000060" stroke-width="1.0"/>
<polygon points="702.7,393.9 717.2,393.9 717.7,401.9 729.8,401.9 761.2,404.2 761.2,408.4 758.4,413.1 747.2,421.6 723.8,422.5 721.4,419.7 709.2,416.0 700.8,413.1 700.8,400.0" fill="#ababab" stroke="#000060" stroke-width="1.0" stroke-linejoin="round" />
<polyline points="700.8,400.0 723.8,405.2 761.2,404.2" fill="none" stroke="#000060" stroke-width="1.0"/>
<polyline points="705.0,401.0 705.0,413.0" fill="none" stroke="#000060" stroke-width="1.0"/>
<polyline points="716.0,404.0 716.0,416.0" fill="none" stroke="#000060" stroke-width="1.0"/>
<polyline points="723.8,405.2 735.0,418.0" fill="none" stroke="#000060" stroke-width="1.0"/>
<polyline points="730.0,408.5 761.0,408.4" fill="none" stroke="#000060" stroke-width="1.0"/>
<polygon points="747.7,415.0 767.8,415.0 772.5,417.3 772.5,428.6 755.6,429.5 748.1,426.2" fill="#ababab" stroke="#000060" stroke-width="1.0" stroke-linejoin="round" />
<polyline points="747.7,415.0 755.6,417.3 772.5,417.3" fill="none" stroke="#000060" stroke-width="1.0"/>
<polyline points="755.6,417.3 755.6,429.5" fill="none" stroke="#000060" stroke-width="1.0"/>
<polyline points="609.4,431.4 747.0,424.5" fill="none" stroke="#000060" stroke-width="1.0"/>
<text x="61" y="93.0" font-family="Liberation Sans" font-weight="bold" font-size="10.5" letter-spacing="0.5" fill="#003a10">Verts:</text>
<text x="175" y="93.0" text-anchor="end" font-family="Liberation Sans" font-weight="bold" font-size="10.5" fill="#ffffff">64212</text>
<text x="240" y="93.0" text-anchor="end" font-family="Liberation Sans" font-weight="bold" font-size="10.5" fill="#ffffff">0</text>
<text x="305" y="93.0" text-anchor="end" font-family="Liberation Sans" font-weight="bold" font-size="10.5" fill="#ffffff">0</text>
<text x="61" y="113.0" font-family="Liberation Sans" font-weight="bold" font-size="10.5" letter-spacing="0.5" fill="#003a10">Edges:</text>
<text x="175" y="113.0" text-anchor="end" font-family="Liberation Sans" font-weight="bold" font-size="10.5" fill="#ffffff">159659</text>
<text x="240" y="113.0" text-anchor="end" font-family="Liberation Sans" font-weight="bold" font-size="10.5" fill="#ffffff">0</text>
<text x="305" y="113.0" text-anchor="end" font-family="Liberation Sans" font-weight="bold" font-size="10.5" fill="#ffffff">0</text>
<text x="61" y="133.0" font-family="Liberation Sans" font-weight="bold" font-size="10.5" letter-spacing="0.5" fill="#003a10">Faces:</text>
<text x="175" y="133.0" text-anchor="end" font-family="Liberation Sans" font-weight="bold" font-size="10.5" fill="#ffffff">96491</text>
<text x="240" y="133.0" text-anchor="end" font-family="Liberation Sans" font-weight="bold" font-size="10.5" fill="#ffffff">0</text>
<text x="305" y="133.0" text-anchor="end" font-family="Liberation Sans" font-weight="bold" font-size="10.5" fill="#ffffff">0</text>
<text x="61" y="152.5" font-family="Liberation Sans" font-weight="bold" font-size="10.5" letter-spacing="0.5" fill="#003a10">Tris:</text>
<text x="175" y="152.5" text-anchor="end" font-family="Liberation Sans" font-weight="bold" font-size="10.5" fill="#ffffff">106049</text>
<text x="240" y="152.5" text-anchor="end" font-family="Liberation Sans" font-weight="bold" font-size="10.5" fill="#ffffff">0</text>
<text x="305" y="152.5" text-anchor="end" font-family="Liberation Sans" font-weight="bold" font-size="10.5" fill="#ffffff">0</text>
<text x="61" y="172.2" font-family="Liberation Sans" font-weight="bold" font-size="10.5" letter-spacing="0.5" fill="#003a10">UVs:</text>
<text x="175" y="172.2" text-anchor="end" font-family="Liberation Sans" font-weight="bold" font-size="10.5" fill="#ffffff">135912</text>
<text x="240" y="172.2" text-anchor="end" font-family="Liberation Sans" font-weight="bold" font-size="10.5" fill="#ffffff">0</text>
<text x="305" y="172.2" text-anchor="end" font-family="Liberation Sans" font-weight="bold" font-size="10.5" fill="#ffffff">0</text>
<ellipse cx="1614" cy="165" rx="32" ry="9" fill="url(#shadow)"/>
<polygon points="1580.3,111 1603.2,110.1 1638.2,114 1590.2,115.3" fill="#b4c6dc" stroke="#7f8f9f" stroke-width="0.6"/>
<polygon points="1580.3,111 1590.2,115.3 1590.2,166.3 1581.2,153.8" fill="#a0b3c9" stroke="#7f8f9f" stroke-width="0.6"/>
<polygon points="1590.2,115.3 1638.2,114 1637.4,162 1590.2,166.3" fill="url(#cubef)" stroke="#7f8f9f" stroke-width="0.6"/>
<text x="1602" y="145.6" textLength="26" lengthAdjust="spacingAndGlyphs" font-family="Liberation Sans" font-weight="bold" font-size="14.5" fill="#6c7f93" transform="rotate(-3 1614 140)">BACK</text>
<path d="M68.5 999 V1012" stroke="#20d020" stroke-width="1"/><path d="M55 1012 H67" stroke="#d02020" stroke-width="1"/>
<text x="66" y="995" font-family="Liberation Sans" font-weight="bold" font-size="9" fill="#20e020">y</text>
<text x="62" y="1006" font-family="Liberation Sans" font-weight="bold" font-size="9" fill="#2030ff">z</text>
<text x="52" y="1011" font-family="Liberation Sans" font-weight="bold" font-size="9" fill="#ff2020">x</text>
<text x="832" y="1028" font-family="Liberation Sans" font-weight="bold" font-size="11.5" fill="#005a0c">persp</text>
</g>
</svg>
</body></html>
